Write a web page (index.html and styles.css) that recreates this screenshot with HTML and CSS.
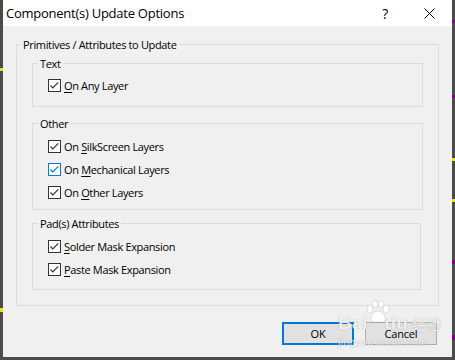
FILE: index.html
```html
<!DOCTYPE html>
<html lang="en">
<head>
<meta charset="utf-8">
<title>Component(s) Update Options</title>
<link rel="stylesheet" href="styles.css">
</head>
<body>
<div class="dialog">
  <div class="titlebar">
    <span class="title">Component(s) Update Options</span>
    <span class="cbtn help">?</span>
    <span class="cbtn close">
      <svg width="11" height="11" viewBox="0 0 11 11"><path d="M0.5 0.5 L10.5 10.5 M10.5 0.5 L0.5 10.5" stroke="#000" stroke-width="1" fill="none"/></svg>
    </span>
  </div>
  <div class="content">
    <div class="group outer">
      <div class="legend">Primitives / Attributes to Update</div>
      <div class="group inner g-text">
        <div class="legend">Text</div>
        <div class="rows">
          <label class="row"><span class="cb"><svg width="13" height="13" viewBox="0 0 13 13"><rect x="0.5" y="0.5" width="12" height="12" fill="#fff" stroke="#333"/><path d="M2.5 6.5 L4.8 8.8 L10.3 3.3" fill="none" stroke="#333" stroke-width="1.2"/></svg></span><span><u>O</u>n Any Layer</span></label>
        </div>
      </div>
      <div class="group inner g-other">
        <div class="legend">Other</div>
        <div class="rows">
          <label class="row"><span class="cb"><svg width="13" height="13" viewBox="0 0 13 13"><rect x="0.5" y="0.5" width="12" height="12" fill="#fff" stroke="#333"/><path d="M2.5 6.5 L4.8 8.8 L10.3 3.3" fill="none" stroke="#333" stroke-width="1.2"/></svg></span><span>On <u>S</u>ilkScreen Layers</span></label>
          <label class="row"><span class="cb"><svg width="13" height="13" viewBox="0 0 13 13"><rect x="0.5" y="0.5" width="12" height="12" fill="#fff" stroke="#0078d7"/><path d="M2.5 6.5 L4.8 8.8 L10.3 3.3" fill="none" stroke="#0078d7" stroke-width="1.2"/></svg></span><span>On <u>M</u>echanical Layers</span></label>
          <label class="row"><span class="cb"><svg width="13" height="13" viewBox="0 0 13 13"><rect x="0.5" y="0.5" width="12" height="12" fill="#fff" stroke="#333"/><path d="M2.5 6.5 L4.8 8.8 L10.3 3.3" fill="none" stroke="#333" stroke-width="1.2"/></svg></span><span>On <u>O</u>ther Layers</span></label>
        </div>
      </div>
      <div class="group inner g-pad">
        <div class="legend">Pad(s) Attributes</div>
        <div class="rows">
          <label class="row"><span class="cb"><svg width="13" height="13" viewBox="0 0 13 13"><rect x="0.5" y="0.5" width="12" height="12" fill="#fff" stroke="#333"/><path d="M2.5 6.5 L4.8 8.8 L10.3 3.3" fill="none" stroke="#333" stroke-width="1.2"/></svg></span><span><u>S</u>older Mask Expansion</span></label>
          <label class="row"><span class="cb"><svg width="13" height="13" viewBox="0 0 13 13"><rect x="0.5" y="0.5" width="12" height="12" fill="#fff" stroke="#333"/><path d="M2.5 6.5 L4.8 8.8 L10.3 3.3" fill="none" stroke="#333" stroke-width="1.2"/></svg></span><span><u>P</u>aste Mask Expansion</span></label>
        </div>
      </div>
    </div>
    <div class="buttons">
      <button class="btn default">OK</button>
      <button class="btn">Cancel</button>
    </div>
  </div>
  <div class="watermark">
    <div class="wm-logo"><span>Bai</span><svg class="paw" width="26" height="24" viewBox="0 0 26 24"><ellipse cx="6" cy="9" rx="3" ry="4" /><ellipse cx="11" cy="4" rx="3" ry="3.6"/><ellipse cx="17" cy="4" rx="3" ry="3.6"/><ellipse cx="22" cy="9" rx="3" ry="4"/><path d="M14 11 C9 11 6 17 7 20 C8 23 12 22 14 22 C16 22 20 23 21 20 C22 17 19 11 14 11 Z"/></svg><span class="du">du</span><span class="jy">经验</span></div>
    <div class="wm-url">jingyan.baidu.com</div>
  </div>
</div>
</body>
</html>
```
FILE: styles.css
```css
html, body {
  margin: 0;
  padding: 0;
}
body {
  width: 455px;
  height: 360px;
  overflow: hidden;
  background:
    linear-gradient(#e6e600, #e6e600) 0 68px / 3px 3px no-repeat,
    linear-gradient(#e6e600, #e6e600) 0 308px / 3px 4px no-repeat,
    linear-gradient(#e6e600, #e6e600) 452px 158px / 3px 3px no-repeat,
    linear-gradient(#e6e600, #e6e600) 452px 199px / 3px 3px no-repeat,
    linear-gradient(#800080, #800080) 452px 20px / 3px 3px no-repeat,
    linear-gradient(#800080, #800080) 452px 95px / 3px 3px no-repeat,
    linear-gradient(#800080, #800080) 452px 260px / 3px 4px no-repeat,
    linear-gradient(#800080, #800080) 452px 335px / 3px 5px no-repeat,
    #4b4b4b;
  font-family: "Open Sans", "Noto Sans", "Noto Sans CJK SC", sans-serif;
  font-size: 11px;
  letter-spacing: -0.35px;
  color: #000;
}
.dialog {
  position: relative;
  margin-left: 3px;
  width: 449px;
  height: 357px;
  background: #f0f0f0;
  display: flex;
  flex-direction: column;
}
.titlebar {
  height: 26px;
  background: #fff;
  display: flex;
  align-items: center;
  padding-left: 3px;
}
.title {
  flex: 1;
  font-size: 13px;
  letter-spacing: -0.25px;
  color: #000;
}
.cbtn {
  width: 46px;
  height: 26px;
  display: flex;
  align-items: center;
  justify-content: center;
}
.help {
  font-size: 14px;
  padding-left: 4px;
  box-sizing: border-box;
}
.close svg {
  display: block;
}
.content {
  padding: 18px 0 0 13px;
  display: flex;
  flex-direction: column;
}
.group {
  box-sizing: border-box;
  border: 1px solid #dcdcdc;
  display: flex;
  flex-direction: column;
}
.outer {
  width: 423px;
  height: 262px;
  padding-left: 4px;
}
.legend {
  align-self: flex-start;
  margin-top: -8px;
  height: 15px;
  line-height: 15px;
  padding: 0 2px;
  background: #f0f0f0;
  white-space: nowrap;
}
.inner {
  margin-left: 11px;
  width: 391px;
}
.inner .legend {
  margin-left: 5px;
}
.g-text {
  margin-top: 11px;
  height: 44px;
}
.g-other {
  margin-top: 16px;
  height: 87px;
}
.g-pad {
  margin-top: 13px;
  height: 67px;
  width: 389px;
}
.rows {
  padding-top: 4px;
  padding-left: 15px;
  display: flex;
  flex-direction: column;
}
.g-text .rows {
  padding-top: 3px;
}
.row {
  height: 23px;
  display: flex;
  align-items: center;
  gap: 3px;
  white-space: nowrap;
}
.cb {
  width: 13px;
  height: 13px;
  flex: none;
}
.cb svg {
  display: block;
}
.row u {
  text-decoration-thickness: 1px;
  text-underline-offset: 2px;
}
.buttons {
  margin-top: 16px;
  padding-right: 15px;
  display: flex;
  justify-content: flex-end;
  gap: 11px;
}
.btn {
  box-sizing: border-box;
  width: 72px;
  height: 23px;
  padding: 0;
  border: 1px solid #adadad;
  background: #e1e1e1;
  font-family: "Open Sans", "Noto Sans", sans-serif;
  font-size: 11px;
  letter-spacing: -0.2px;
  color: #000;
}
.btn.default {
  border: 2px solid #0078d7;
}
.watermark {
  position: absolute;
  left: 335px;
  top: 298px;
  color: rgba(255, 255, 255, 0.85);
  text-shadow: 0 0 1px rgba(0, 0, 0, 0.35);
  letter-spacing: 0;
  pointer-events: none;
}
.wm-logo {
  display: flex;
  align-items: flex-end;
  font-family: "Liberation Sans", sans-serif;
  font-weight: bold;
  font-size: 19px;
  line-height: 18px;
  height: 34px;
}
.paw {
  fill: rgba(255, 255, 255, 0.85);
  stroke: rgba(0, 0, 0, 0.18);
  stroke-width: 0.6;
  margin: 0 -3px 8px -4px;
}
.du {
  margin-left: -2px;
}
.jy {
  margin-left: 4px;
  font-family: "Noto Sans CJK SC", sans-serif;
  font-size: 15px;
  line-height: 16px;
  font-weight: normal;
}
.wm-url {
  font-family: "Liberation Sans", sans-serif;
  font-size: 10px;
  line-height: 11px;
  letter-spacing: 0.5px;
  margin-top: 5px;
}
```
